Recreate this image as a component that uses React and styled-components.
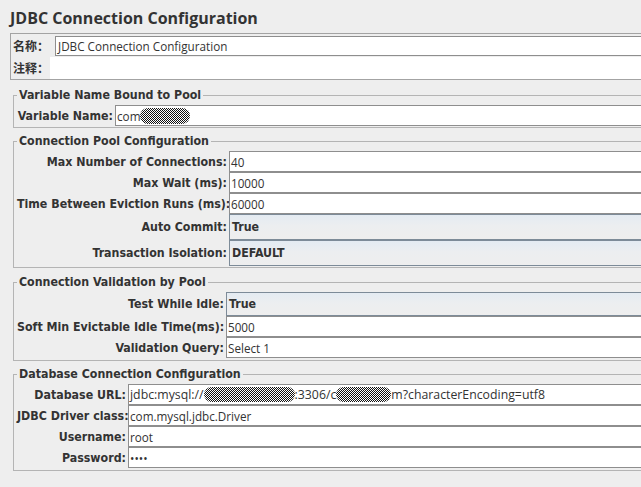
import React, { useId } from 'react';
import styled, { createGlobalStyle } from 'styled-components';

const Global = createGlobalStyle`
  html, body { margin: 0; padding: 0; background: #eeeeee; overflow: hidden; }
  body { width: 641px; height: 487px; }
`;

const LABEL_FONT = `"DejaVu Sans Condensed", "DejaVu Sans", sans-serif`;
const TEXT_FONT = `"Open Sans", sans-serif`;

const Page = styled.div`
  width: 760px;
  padding: 6px 0 0 10px;
  box-sizing: border-box;
  color: #333;
`;

const Title = styled.h1`
  margin: 0;
  height: 24px;
  font: 700 16px/24px ${TEXT_FONT};
  color: #333;
  white-space: nowrap;
`;

const NamePanel = styled.div`
  margin-top: 3px;
  border: 1px solid #a3a3a3;
  padding: 2px 0 0 2px;
  display: grid;
  row-gap: 1px;
`;

const NameRow = styled.div`
  display: flex;
  align-items: center;
`;

const CjkLabel = styled.span`
  flex: none;
  width: ${(p) => p.$w}px;
  font: 700 12px/20px "Noto Sans CJK SC", sans-serif;
  color: #333;
  white-space: nowrap;
`;

const Field = styled.div`
  flex: 1;
  box-sizing: border-box;
  height: ${(p) => p.$h || 21}px;
  background: #fff;
  border: 1px solid #8e8e8e;
  border-right: none;
  padding-left: ${(p) => p.$pad ?? 1}px;
  display: flex;
  align-items: center;
  font: 400 ${(p) => p.$size || 11.7}px ${TEXT_FONT};
  color: #333;
  white-space: nowrap;
  overflow: hidden;
`;

const CommentArea = styled.div`
  flex: 1;
  height: 22px;
  background: #fff;
`;

const Group = styled.fieldset`
  margin: ${(p) => p.$top}px 0 0 3px;
  padding: 3px 0 ${(p) => p.$bottom}px 3px;
  border: 1px solid #b4b4b4;
  min-width: 0;
  display: grid;
  grid-template-columns: ${(p) => p.$labelW}px 1fr;
  column-gap: 2px;
`;

const Legend = styled.legend`
  padding: 0 2px;
  margin-left: 0;
  font: 700 12.3px/14px ${LABEL_FONT};
  color: #333;
  white-space: nowrap;
`;

const Label = styled.span`
  align-self: center;
  text-align: right;
  font: 700 12.3px/16px ${LABEL_FONT};
  color: #333;
  white-space: nowrap;
`;

const Combo = styled.div`
  box-sizing: border-box;
  height: ${(p) => p.$h}px;
  border: 1px solid #7d8b98;
  border-right: none;
  background: linear-gradient(#e4ebf2 0%, #eceef0 45%, #eeeeee 100%);
  padding-left: 2px;
  display: flex;
  align-items: center;
  font: 700 12.3px ${LABEL_FONT};
  color: #333;
`;

const ScribbleSvg = styled.svg`
  flex: none;
  display: block;
`;

function Scribble({ w, h }) {
  const id = 'chk' + useId().replace(/[^a-zA-Z0-9]/g, '');
  return (
    <ScribbleSvg width={w} height={h} viewBox={`0 0 ${w} ${h}`}>
      <defs>
        <pattern id={id} width="2" height="2" patternUnits="userSpaceOnUse">
          <rect width="2" height="2" fill="#ffffff" />
          <rect width="1" height="1" fill="#111" />
          <rect x="1" y="1" width="1" height="1" fill="#111" />
        </pattern>
      </defs>
      <rect x="0" y="0" width={w} height={h} rx={h / 2} ry={h / 2} fill={`url(#${id})`} />
    </ScribbleSvg>
  );
}

function Row({ label, children }) {
  return (
    <>
      <Label>{label}</Label>
      {children}
    </>
  );
}

export default function App() {
  return (
    <>
      <Global />
      <Page>
        <Title>JDBC Connection Configuration</Title>
        <NamePanel>
          <NameRow>
            <CjkLabel $w={42}>名称：</CjkLabel>
            <Field $h={20} $pad={2}>JDBC Connection Configuration</Field>
          </NameRow>
          <NameRow>
            <CjkLabel $w={37}>注释：</CjkLabel>
            <CommentArea />
          </NameRow>
        </NamePanel>

        <Group $top={8} $bottom={1} $labelW={96}>
          <Legend>Variable Name Bound to Pool</Legend>
          <Row label="Variable Name:">
            <Field>
              com
              <Scribble w={50} h={16} />
            </Field>
          </Row>
        </Group>

        <Group $top={6} $bottom={1} $labelW={210}>
          <Legend>Connection Pool Configuration</Legend>
          <Row label="Max Number of Connections:">
            <Field>40</Field>
          </Row>
          <Row label="Max Wait (ms):">
            <Field>10000</Field>
          </Row>
          <Row label="Time Between Eviction Runs (ms):">
            <Field>60000</Field>
          </Row>
          <Row label="Auto Commit:">
            <Combo $h={26}>True</Combo>
          </Row>
          <Row label="Transaction Isolation:">
            <Combo $h={26}>DEFAULT</Combo>
          </Row>
        </Group>

        <Group $top={7} $bottom={2} $labelW={207}>
          <Legend>Connection Validation by Pool</Legend>
          <Row label="Test While Idle:">
            <Combo $h={24}>True</Combo>
          </Row>
          <Row label="Soft Min Evictable Idle Time(ms):">
            <Field>5000</Field>
          </Row>
          <Row label="Validation Query:">
            <Field>Select 1</Field>
          </Row>
        </Group>

        <Group $top={6} $bottom={2} $labelW={109}>
          <Legend>Database Connection Configuration</Legend>
          <Row label="Database URL:">
            <Field $size={12.3}>
              jdbc:mysql://
              <Scribble w={91} h={15} />
              :3306/c
              <Scribble w={55} h={15} />
              m?characterEncoding=utf8
            </Field>
          </Row>
          <Row label="JDBC Driver class:">
            <Field>com.mysql.jdbc.Driver</Field>
          </Row>
          <Row label="Username:">
            <Field>root</Field>
          </Row>
          <Row label="Password:">
            <Field>••••</Field>
          </Row>
        </Group>
      </Page>
    </>
  );
}
